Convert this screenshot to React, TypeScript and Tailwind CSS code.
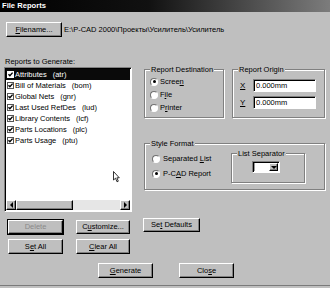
import type { ReactNode } from 'react';
import clsx from 'clsx';

const REPORTS = [
  ['Attributes', '(atr)'],
  ['Bill of Materials', '(bom)'],
  ['Global Nets', '(gnr)'],
  ['Last Used RefDes', '(lud)'],
  ['Library Contents', '(lcf)'],
  ['Parts Locations', '(plc)'],
  ['Parts Usage', '(ptu)'],
];

function Btn({
  children,
  className,
  disabled,
  focused,
}: {
  children: ReactNode;
  className?: string;
  disabled?: boolean;
  focused?: boolean;
}) {
  return (
    <div
      className={clsx(
        'flex items-center justify-center border border-t-white border-l-white border-b-black border-r-black bg-[#bfbfbf] leading-none shadow-[inset_-1px_-1px_0_#808080]',
        focused && 'outline outline-1 outline-black',
        disabled ? 'text-[#8a8a8a]' : 'text-black',
        className
      )}>
      {children}
    </div>
  );
}

function Radio({ checked }: { checked?: boolean }) {
  return (
    <span className="flex size-[8px] shrink-0 items-center justify-center rounded-full border border-t-[#707070] border-l-[#707070] border-b-white border-r-white bg-white">
      {checked && <span className="size-[3px] rounded-full bg-black" />}
    </span>
  );
}

function Check({ inverted }: { inverted?: boolean }) {
  return (
    <svg width="7" height="7" viewBox="0 0 7 7" className="shrink-0">
      <rect x="0.5" y="0.5" width="6" height="6" fill="#fff" stroke={inverted ? '#fff' : '#555'} />
      <path d="M1.5 3.2 L2.9 4.8 L5.6 1.6" fill="none" stroke="#000" strokeWidth="1.4" />
    </svg>
  );
}

function Group({ label, className, children }: { label: string; className?: string; children: ReactNode }) {
  return (
    <fieldset
      className={clsx(
        'border border-[#808080] shadow-[inset_1px_1px_0_#fff,1px_1px_0_#fff]',
        className
      )}>
      <legend className="ml-[5px] bg-[#bfbfbf] px-[1px] leading-[9px]">{label}</legend>
      {children}
    </fieldset>
  );
}

function Arrow({ dir }: { dir: 'l' | 'r' | 'd' }) {
  const pts = dir === 'l' ? '3,0 0,3 3,6' : dir === 'r' ? '0,0 3,3 0,6' : '0,0 6,0 3,3';
  return (
    <svg width={dir === 'd' ? 6 : 3} height={dir === 'd' ? 3 : 6} viewBox={dir === 'd' ? '0 0 6 3' : '0 0 3 6'}>
      <polygon points={pts} fill="#000" />
    </svg>
  );
}

function Field({ value }: { value: string }) {
  return (
    <div className="flex h-[13px] w-[63px] items-center border border-t-[#808080] border-l-[#808080] border-b-white border-r-white bg-white pl-[2px] shadow-[inset_1px_1px_0_#000]">
      {value}
    </div>
  );
}

export default function App() {
  return (
    <div
      className="flex h-[288px] w-[330px] flex-col overflow-hidden bg-[#bfbfbf] text-[7.5px] text-black"
      style={{ fontFamily: '"Liberation Sans", Arial, sans-serif' }}>
      <div className="flex h-[12px] items-center bg-[linear-gradient(90deg,#000_0%,#111_45%,#7c7c7c_100%)] pl-[2px] text-[7.6px] font-bold text-white">
        File Reports
      </div>

      <div className="mt-[10px] flex items-center pl-[6px]">
        <Btn className="h-[15px] w-[56px]">
          <span>
            <u>F</u>ilename...
          </span>
        </Btn>
        <span className="ml-[2px]">E:\P-CAD 2000\Проекты\Усилитель\Усилитель</span>
      </div>

      <div className="mt-[20px] flex">
        <div className="ml-[4px] flex w-[128px] flex-col">
          <div className="h-[10px] pl-[1px] leading-[10px]">Reports to Generate:</div>
          <div className="relative flex h-[145px] flex-col border border-t-[#808080] border-l-[#808080] border-b-white border-r-white bg-white p-[1px] shadow-[inset_1px_1px_0_#000]">
            <div className="flex-1">
              {REPORTS.map(([name, code], i) => (
                <div
                  key={name}
                  className={clsx(
                    'flex h-[11px] items-center gap-[1px] pl-[1px]',
                    i === 0 ? 'bg-[#0a0a0a] text-white' : 'text-black'
                  )}>
                  <Check inverted={i === 0} />
                  <span>{name}</span>
                  <span className="ml-[5px]">{code}</span>
                </div>
              ))}
            </div>
            <div className="flex h-[10px]">
              <Btn className="w-[10px]">
                <Arrow dir="l" />
              </Btn>
              <Btn className="w-[57px]">{null}</Btn>
              <div className="flex-1 bg-[#e6e6e6]" />
              <Btn className="w-[10px]">
                <Arrow dir="r" />
              </Btn>
            </div>
            <svg width="7" height="12" viewBox="0 0 7 12" className="absolute left-[108px] top-[103px]">
              <polygon points="0.5,0.5 0.5,9 2.5,7.2 4,10.8 5.3,10.2 3.9,6.8 6.3,6.8" fill="#fff" stroke="#000" strokeWidth="0.8" />
            </svg>
          </div>
          <div className="mt-[8px] flex gap-[13px] pl-[4px]">
            <Btn className="h-[14px] w-[55px]" disabled focused>
              Delete
            </Btn>
            <Btn className="h-[14px] w-[54px]">
              <span>
                C<u>u</u>stomize...
              </span>
            </Btn>
          </div>
          <div className="mt-[5px] flex gap-[13px] pl-[4px]">
            <Btn className="h-[15px] w-[55px]">
              <span>
                S<u>e</u>t All
              </span>
            </Btn>
            <Btn className="h-[15px] w-[54px]">
              <span>
                <u>C</u>lear All
              </span>
            </Btn>
          </div>
        </div>

        <div className="ml-[12px] flex w-[181px] flex-col pt-[8px]">
          <div className="flex h-[53px] gap-[8px]">
            <Group label="Report Destination" className="w-[80px]">
              <div className="flex flex-col pl-[5px] pt-[1px]">
                <div className="flex h-[13px] items-center gap-[2px]">
                  <Radio checked />
                  <span>
                    Scree<u>n</u>
                  </span>
                </div>
                <div className="flex h-[13px] items-center gap-[2px]">
                  <Radio />
                  <span>
                    F<u>i</u>le
                  </span>
                </div>
                <div className="flex h-[14px] items-center gap-[2px]">
                  <Radio />
                  <span>
                    P<u>r</u>inter
                  </span>
                </div>
              </div>
            </Group>
            <Group label="Report Origin" className="w-[93px]">
              <div className="flex flex-col gap-[4px] pl-[7px] pt-[5px]">
                <div className="flex items-center">
                  <span className="w-[13px] text-[8px]">
                    <u>X</u>
                  </span>
                  <Field value="0.000mm" />
                </div>
                <div className="flex items-center">
                  <span className="w-[13px] text-[8px]">
                    <u>Y</u>
                  </span>
                  <Field value="0.000mm" />
                </div>
              </div>
            </Group>
          </div>

          <Group label="Style Format" className="mt-[21px] h-[51px] w-[181px]">
            <div className="flex">
              <div className="flex flex-col gap-[2px] pl-[7px] pt-[4px]">
                <div className="flex h-[13px] items-center gap-[3px]">
                  <Radio />
                  <span>
                    Separated <u>L</u>ist
                  </span>
                </div>
                <div className="flex h-[13px] items-center gap-[3px]">
                  <Radio checked />
                  <span>
                    P-C<u>A</u>D Report
                  </span>
                </div>
              </div>
              <Group label="List Separator" className="ml-auto mr-[19px] mt-[1px] h-[34px] w-[74px]">
                <div className="ml-[20px] mt-[3px] flex h-[12px] w-[28px] border border-t-[#808080] border-l-[#808080] border-b-white border-r-white bg-white p-[1px] shadow-[inset_1px_1px_0_#000]">
                  <div className="flex-1 border-l border-black/40" />
                  <Btn className="w-[9px]">
                    <Arrow dir="d" />
                  </Btn>
                </div>
              </Group>
            </div>
          </Group>

          <Btn className="-ml-[1px] mt-[28px] h-[14px] w-[57px]">
            <span>
              Se<u>t</u> Defaults
            </span>
          </Btn>
        </div>
      </div>

      <div className="mt-[9px] flex gap-[26px] pl-[98px]">
        <Btn className="h-[15px] w-[55px]">
          <span>
            <u>G</u>enerate
          </span>
        </Btn>
        <Btn className="h-[15px] w-[55px]">
          <span>
            Clo<u>s</u>e
          </span>
        </Btn>
      </div>

      <div className="mt-auto h-[3px] border-t border-[#7a7a7a]" />
    </div>
  );
}
